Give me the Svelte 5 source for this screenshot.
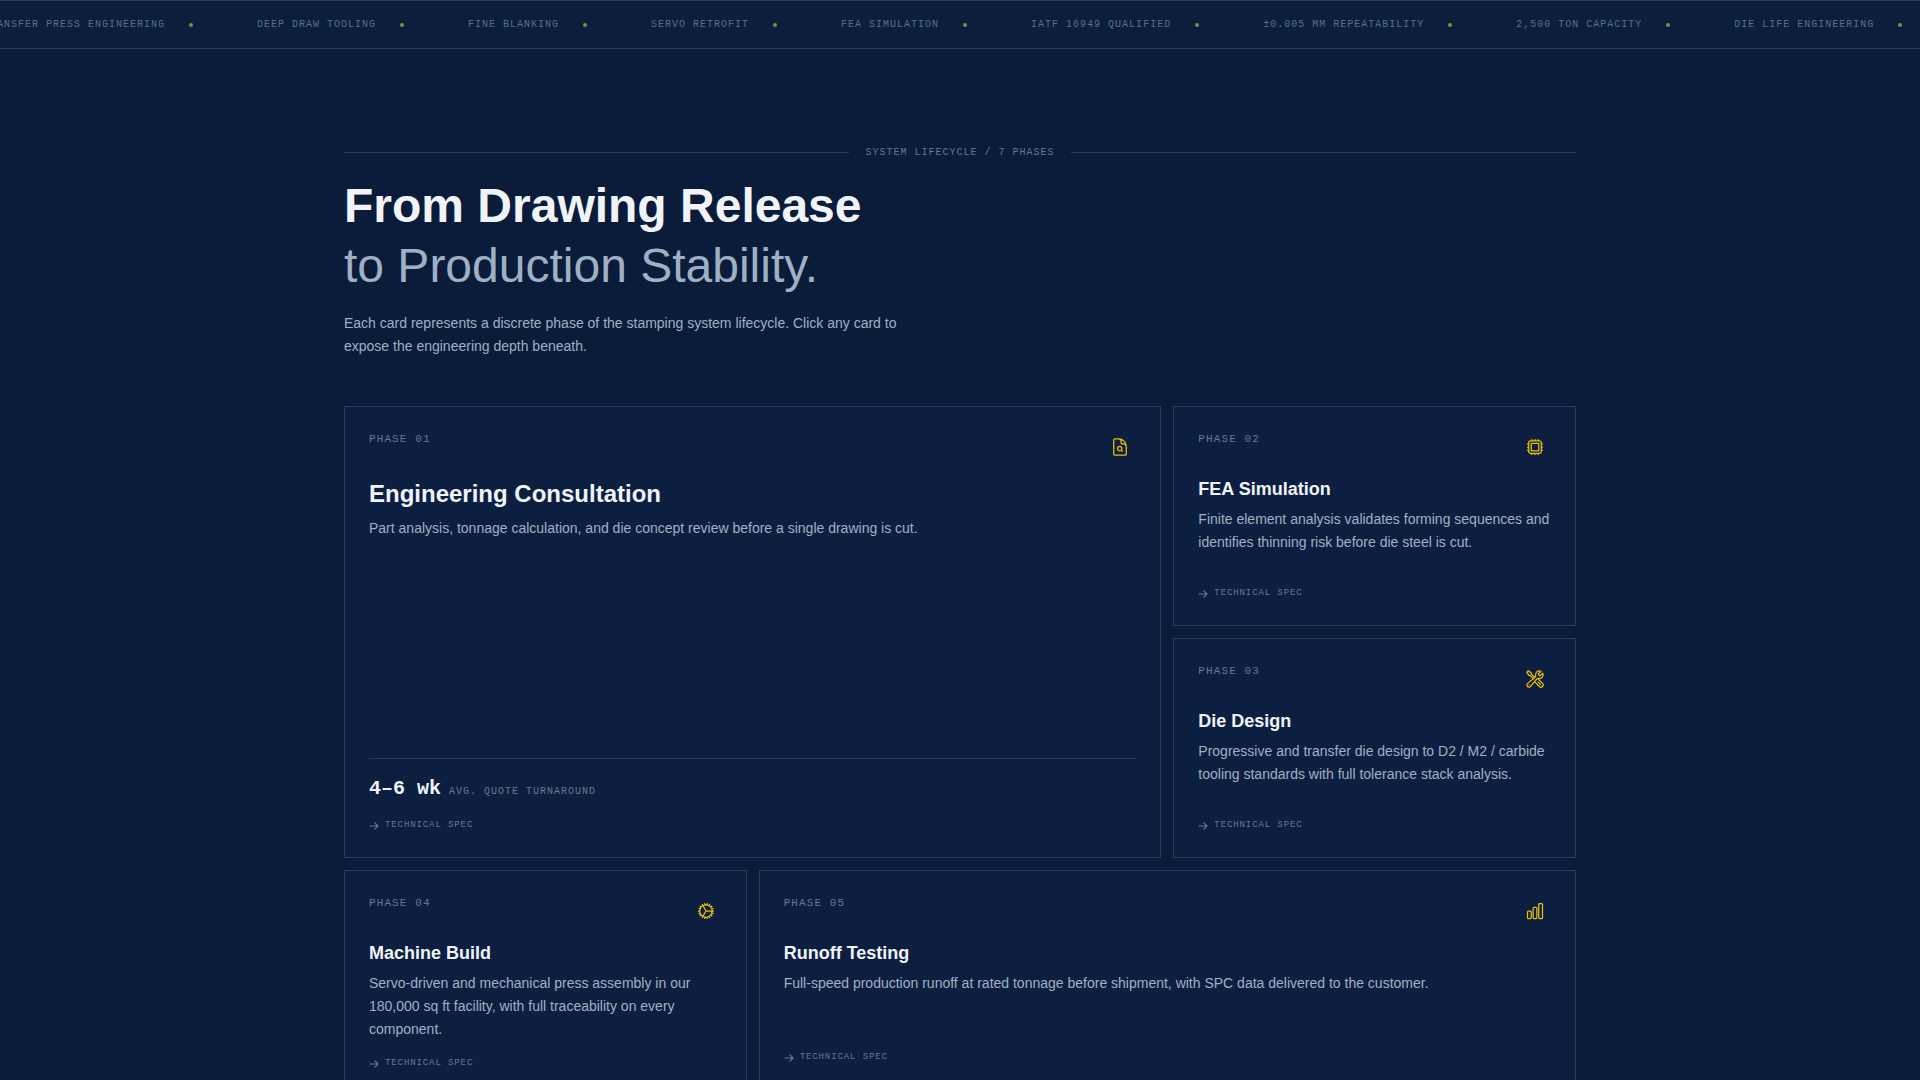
<script>
    const ticker = [
        'Transfer Press Engineering',
        'Deep Draw Tooling',
        'Fine Blanking',
        'Servo Retrofit',
        'FEA Simulation',
        'IATF 16949 Qualified',
        '±0.005 mm Repeatability',
        '2,500 Ton Capacity',
        'Die Life Engineering'
    ];

    const icons = {
        document: 'M19.5 14.25v-2.625a3.375 3.375 0 0 0-3.375-3.375h-1.5A1.125 1.125 0 0 1 13.5 7.125v-1.5a3.375 3.375 0 0 0-3.375-3.375H8.25m5.231 13.481L15 17.25m-4.5-15H5.625c-.621 0-1.125.504-1.125 1.125v17.25c0 .621.504 1.125 1.125 1.125h12.75c.621 0 1.125-.504 1.125-1.125V11.25a9 9 0 0 0-9-9Zm3.75 11.625a2.625 2.625 0 1 1-5.25 0 2.625 2.625 0 0 1 5.25 0Z',
        chip: 'M8.25 3v1.5M4.5 8.25H3m18 0h-1.5M4.5 12H3m18 0h-1.5m-15 3.75H3m18 0h-1.5M8.25 19.5V21M12 3v1.5m0 15V21m3.75-18v1.5m0 15V21m-9-1.5h10.5a2.25 2.25 0 0 0 2.25-2.25V6.75a2.25 2.25 0 0 0-2.25-2.25H6.75A2.25 2.25 0 0 0 4.5 6.75v10.5a2.25 2.25 0 0 0 2.25 2.25Zm.75-12h9v9h-9v-9Z',
        tools: 'M11.42 15.17 17.25 21A2.652 2.652 0 0 0 21 17.25l-5.877-5.877M11.42 15.17l2.496-3.03c.317-.384.74-.626 1.208-.766M11.42 15.17l-4.655 5.653a2.548 2.548 0 1 1-3.586-3.586l6.837-5.63m5.108-.233c.55-.164 1.163-.188 1.743-.14a4.5 4.5 0 0 0 4.486-6.336l-3.276 3.277a3.004 3.004 0 0 1-2.25-2.25l3.276-3.276a4.5 4.5 0 0 0-6.336 4.486c.091 1.076-.071 2.264-.904 2.95l-.102.085m-1.745 1.437L5.909 7.5H4.5L2.25 3.75l1.5-1.5L7.5 4.5v1.409l4.26 4.26m-1.745 1.437 1.745-1.437m6.615 8.206L15.75 15.75M4.867 19.125h.008v.008h-.008v-.008Z',
        cog: 'M4.5 12a7.5 7.5 0 0 0 15 0m-15 0a7.5 7.5 0 1 1 15 0m-15 0H3m16.5 0H21m-1.5 0H12m-8.457 3.077 1.41-.513m14.095-5.13 1.41-.513M5.106 17.785l1.15-.964m11.49-9.642 1.149-.964M7.501 19.795l.75-1.3m7.5-12.99.75-1.3m-6.063 16.658.26-1.477m2.605-14.772.26-1.477m0 17.726-.26-1.477M10.698 4.614l-.26-1.477M16.5 19.794l-.75-1.299M7.5 4.205 12 12m6.894 5.785-1.149-.964M6.256 7.178l-1.15-.964m15.352 8.864-1.41-.513M4.954 9.435l-1.41-.514M12.002 12l-3.75 6.495',
        chart: 'M3 13.125C3 12.504 3.504 12 4.125 12h2.25c.621 0 1.125.504 1.125 1.125v6.75C7.5 20.496 6.996 21 6.375 21h-2.25A1.125 1.125 0 0 1 3 19.875v-6.75ZM9.75 8.625c0-.621.504-1.125 1.125-1.125h2.25c.621 0 1.125.504 1.125 1.125v11.25c0 .621-.504 1.125-1.125 1.125h-2.25a1.125 1.125 0 0 1-1.125-1.125V8.625ZM16.5 4.125c0-.621.504-1.125 1.125-1.125h2.25C20.496 3 21 3.504 21 4.125v15.75c0 .621-.504 1.125-1.125 1.125h-2.25a1.125 1.125 0 0 1-1.125-1.125V4.125Z'
    };

    const phases = [
        {
            number: '01',
            size: 'large',
            icon: icons.document,
            title: 'Engineering Consultation',
            text: 'Part analysis, tonnage calculation, and die concept review before a single drawing is cut.',
            stat: { value: '4–6 wk', label: 'Avg. quote turnaround' }
        },
        {
            number: '02',
            icon: icons.chip,
            title: 'FEA Simulation',
            text: 'Finite element analysis validates forming sequences and identifies thinning risk before die steel is cut.'
        },
        {
            number: '03',
            icon: icons.tools,
            title: 'Die Design',
            text: 'Progressive and transfer die design to D2 / M2 / carbide tooling standards with full tolerance stack analysis.'
        },
        {
            number: '04',
            icon: icons.cog,
            title: 'Machine Build',
            text: 'Servo-driven and mechanical press assembly in our 180,000 sq ft facility, with full traceability on every component.'
        },
        {
            number: '05',
            size: 'wide',
            icon: icons.chart,
            title: 'Runoff Testing',
            text: 'Full-speed production runoff at rated tonnage before shipment, with SPC data delivered to the customer.'
        }
    ];
</script>

<div class="ticker">
    <ul class="ticker-track">
        {#each ticker as item}
            <li>{item}<span class="dot"></span></li>
        {/each}
    </ul>
</div>

<main class="lifecycle">
    <p class="eyebrow">System lifecycle / 7 phases</p>
    <h2>From Drawing Release<br /><span>to Production Stability.</span></h2>
    <p class="intro">
        Each card represents a discrete phase of the stamping system lifecycle. Click any card to
        expose the engineering depth beneath.
    </p>

    <div class="grid">
        {#each phases as phase}
            <article class="card {phase.size ?? ''}">
                <header>
                    <span class="phase">Phase {phase.number}</span>
                    <span class="icon">
                        <svg viewBox="0 0 24 24" width="20" height="20" aria-hidden="true">
                            <path d={phase.icon} />
                        </svg>
                    </span>
                </header>
                <h3>{phase.title}</h3>
                <p>{phase.text}</p>
                <footer>
                    {#if phase.stat}
                        <div class="stat">
                            <strong>{phase.stat.value}</strong>
                            <span>{phase.stat.label}</span>
                        </div>
                    {/if}
                    <button type="button">
                        <svg viewBox="0 0 10 10" width="10" height="10" aria-hidden="true">
                            <path d="M1 5h8M5.8 1.8 9 5 5.8 8.2" />
                        </svg>
                        Technical spec
                    </button>
                </footer>
            </article>
        {/each}
    </div>
</main>

<style>
    :global(body) {
        background: #0a1c39;
        color: #a0b0c4;
        font-family: "Liberation Sans", Arial, sans-serif;
        font-size: 14px;
        line-height: 23px;
    }

    :global(html) {
        height: 100%;
        overflow: hidden;
    }

    h2, h3, p, ul {
        margin: 0;
        padding: 0;
    }

    svg {
        display: block;
        fill: none;
        stroke: currentColor;
        stroke-width: 1.5;
        stroke-linecap: round;
        stroke-linejoin: round;
    }

    .ticker {
        overflow: hidden;
        padding: 16px 0;
        background: #0b1f3d;
        border-top: 1px solid #283c5a;
        border-bottom: 1px solid #283c5a;
    }

    .ticker-track {
        display: flex;
        gap: 64px;
        width: max-content;
        margin-left: -17px;
        list-style: none;
    }

    .ticker li {
        display: flex;
        align-items: center;
        gap: 24px;
        white-space: nowrap;
        color: #5a6e8c;
    }

    .ticker li, .eyebrow, .phase, .stat, button {
        font-family: "Liberation Mono", "Courier New", monospace;
        font-size: 10px;
        line-height: 15px;
        letter-spacing: 0.1em;
        text-transform: uppercase;
    }

    .dot {
        width: 4px;
        height: 4px;
        border-radius: 50%;
        background: #8a8a35;
    }

    .lifecycle {
        max-width: 1232px;
        margin: 0 auto;
        padding: 96px 24px;
    }

    .eyebrow {
        display: flex;
        align-items: center;
        gap: 16px;
        margin-bottom: 16px;
        color: #66788f;
    }

    .eyebrow::before, .eyebrow::after {
        content: '';
        flex: 1;
        height: 1px;
        background: #283c5a;
    }

    h2 {
        margin-bottom: 16px;
        font-size: 48px;
        line-height: 60px;
        color: #f0f4f8;
    }

    h2 span {
        font-weight: 400;
        color: #a0b0c4;
    }

    .intro {
        max-width: 560px;
        margin-bottom: 48px;
    }

    .grid {
        display: grid;
        grid-template-columns: repeat(3, 1fr);
        grid-auto-rows: 220px;
        gap: 12px;
    }

    .card {
        display: flex;
        flex-direction: column;
        box-sizing: border-box;
        padding: 24px;
        background: #0d1f41;
        border: 1px solid #283c5a;
    }

    .large {
        grid-column: span 2;
        grid-row: span 2;
    }

    .wide {
        grid-column: span 2;
    }

    header {
        display: flex;
        justify-content: space-between;
        align-items: flex-start;
        margin-bottom: 16px;
    }

    .phase {
        font-size: 11px;
        line-height: 17px;
        color: #66788f;
    }

    .icon {
        display: grid;
        place-items: center;
        width: 32px;
        height: 32px;
        color: #eabf08;
    }

    h3 {
        margin-bottom: 8px;
        font-size: 18px;
        line-height: 21px;
        color: #f0f4f8;
    }

    .large h3 {
        font-size: 24px;
        line-height: 30px;
    }

    footer {
        margin-top: auto;
        padding-top: 14px;
    }

    .stat {
        display: flex;
        align-items: baseline;
        gap: 8px;
        margin-bottom: 12px;
        padding-top: 16px;
        border-top: 1px solid #283c5a;
        line-height: 27px;
        color: #66788f;
    }

    .stat strong {
        font-size: 20px;
        letter-spacing: 0;
        text-transform: none;
        color: #f0f4f8;
    }

    button {
        display: flex;
        align-items: center;
        gap: 6px;
        padding: 0;
        border: 0;
        background: none;
        font-size: 9px;
        line-height: 16px;
        color: #66788f;
        cursor: pointer;
    }

    button svg {
        margin-top: 2px;
        stroke-width: 1.2;
    }
</style>
